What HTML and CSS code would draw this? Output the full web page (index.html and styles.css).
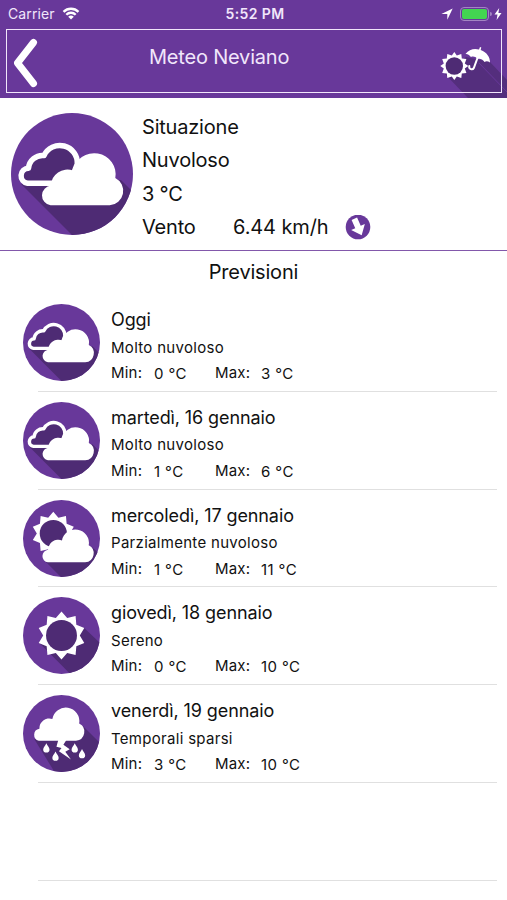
FILE: index.html
```html
<!DOCTYPE html>
<html lang="it">
<head>
    <meta charset="UTF-8">
    <meta name="viewport" content="width=device-width, initial-scale=1.0">
    <title>Meteo Neviano</title>
    <link rel="stylesheet" href="styles.css">
</head>
<body>
    <!-- Shared shapes -->
    <svg class="defs" width="0" height="0">
        <defs>
            <clipPath id="disc"><circle cx="61" cy="61" r="61"/></clipPath>
            <path id="cloud" d="M41 92.3 A10 10 0 0 1 41.500 72.500 A16 16 0 0 1 63 57.500 A21 21 0 0 1 104.500 65 A14.5 14.5 0 0 1 99 92.3 Z"/>
            <polygon id="sun" points="0,-38 9,-27.6 22.3,-30.7 23.5,-17 36.1,-11.7 29,0 36.1,11.7 23.5,17 22.3,30.7 9,27.6 0,38 -9,27.6 -22.3,30.7 -23.5,17 -36.1,11.7 -29,0 -36.1,-11.7 -23.5,-17 -22.3,-30.7 -9,-27.6"/>
            <path id="drop" d="M0 -7.5 C1.5 -3.5 5 -1 5 2.3 A5 5 0 0 1 -5 2.3 C-5 -1 -1.5 -3.5 0 -7.5Z"/>
            <symbol id="nuvoloso" viewBox="0 0 122 122">
                <g clip-path="url(#disc)">
                    <rect class="base" width="122" height="122"/>
                    <path class="dark" d="M10 71 L62 123 H122 V79 L110 67 Z"/>
                    <path class="outline" d="M46 70.3 H16.500 A7.6 7.6 0 0 1 17.500 55.2 A14 14 0 0 1 33 42.500 A17.5 17.5 0 0 1 66.300 51 L62 62 Z"/>
                    <use href="#cloud" class="light" transform="translate(-2.300 0) scale(1.020 1)"/>
                </g>
            </symbol>
            <symbol id="parziale" viewBox="0 0 122 122">
                <g clip-path="url(#disc)">
                    <rect class="base" width="122" height="122"/>
                    <path class="dark" d="M34 96 L60 122 H122 V85 L108 74 Z"/>
                    <use href="#sun" class="light" transform="translate(48 53) scale(.9)"/>
                    <circle class="dark" cx="48" cy="53" r="21.5"/>
                    <use href="#cloud" class="light" transform="translate(-2.500 6.5) scale(1.020 1)"/>
                </g>
            </symbol>
            <symbol id="sereno" viewBox="0 0 122 122">
                <g clip-path="url(#disc)">
                    <rect class="base" width="122" height="122"/>
                    <path class="dark" d="M26 73 L75 122 H122 V73 L97 49 Z"/>
                    <use href="#sun" class="light" transform="translate(61 61)"/>
                    <circle class="dark" cx="61" cy="61" r="24.5"/>
                </g>
            </symbol>
            <symbol id="temporali" viewBox="0 0 122 122">
                <g clip-path="url(#disc)">
                    <rect class="base" width="122" height="122"/>
                    <path class="dark" d="M18 70 L50 122 H122 V76 L95 49 Z"/>
                    <path class="light" d="M25 72.500 A9.700 9.700 0 0 1 26 53.500 A15.500 15.500 0 0 1 46.500 38 A21.500 21.500 0 0 1 89 45 A14.500 14.500 0 0 1 84 72.500 Z"/>
                    <path class="light" d="M56 71 L53 82 L61 84 L57 89 L76 102 L67 90 L74 86 L64 79 L69 71Z"/>
                    <use href="#drop" class="light" x="37" y="84"/>
                    <use href="#drop" class="light" x="51.5" y="97"/>
                    <use href="#drop" class="light" x="82" y="84"/>
                    <use href="#drop" class="light" x="93.500" y="93"/>
                </g>
            </symbol>
        </defs>
    </svg>

    <header class="header">
        <div class="status-bar">
            <div class="status-left">
                <span class="carrier">Carrier</span>
                <svg width="18" height="13" viewBox="0 0 18 13">
                    <path class="wifi" d="M1.500 4.800 A10.800 10.800 0 0 1 16.500 4.800 M4.300 7.700 A6.700 6.700 0 0 1 13.700 7.700"/>
                    <path class="light" d="M9 12.500 L6.200 9.800 A4.200 4.200 0 0 1 11.800 9.800Z"/>
                </svg>
            </div>
            <span class="clock">5:52 PM</span>
            <div class="status-right">
                <svg width="12" height="12" viewBox="0 0 12 12"><path class="light" d="M11.700 .4 L6.300 11.700 V6 H.4Z"/></svg>
                <span class="battery"><span class="level"></span></span>
                <svg width="8" height="12" viewBox="0 0 8 12"><path class="light" d="M5.200 0 L.5 6.600 H3.500 L2.600 12 L7.500 5 H4.400Z"/></svg>
            </div>
        </div>
        <div class="nav-bar">
            <svg class="back" width="26" height="50" viewBox="0 0 26 50"><path d="M21.500 4.500 L5.500 25 L21.500 45.500"/></svg>
            <h1>Meteo Neviano</h1>
        </div>
        <svg class="brand" width="77" height="63" viewBox="0 0 77 63">
            <path class="shade" d="M15 39 L38 63 H77 V45 L60 27 L36 22 Z"/>
            <path class="ray" d="M49 28 L77 57"/>
            <g transform="translate(24.300 31)">
                <path class="light" d="M0-14 L2.500-10.500 L7-12.100 L7.500-7.500 L12.100-7 L10.500-2.500 L14 0 L10.500 2.500 L12.100 7 L7.500 7.500 L7 12.100 L2.500 10.500 L0 14 L-2.500 10.500 L-7 12.100 L-7.500 7.500 L-12.100 7 L-10.500 2.500 L-14 0 L-10.500-2.500 L-12.100-7 L-7.500-7.500 L-7-12.100 L-2.500-10.500Z"/>
                <circle class="dark" r="8.700"/>
            </g>
            <path class="light" d="M35.500 19 C39 14.500 44 13 49 14.500 L50 12 L51.300 12.500 L50.700 15 C57 17.500 60 22 60 27.500 C58 26 56 26 54.500 27 C52.500 24 50 23.500 47.500 24 C45.500 21.500 43 21 41 22 C39 19.500 37 18.500 35.500 19Z"/>
            <path class="handle" d="M48.200 21 L43.800 33 C42.500 35.500 38.500 34 39.300 31"/>
        </svg>
    </header>

    <section class="current">
        <svg class="current-icon"><use href="#nuvoloso"/></svg>
        <div class="current-info">
            <div>Situazione</div>
            <div>Nuvoloso</div>
            <div>3 °C</div>
            <div class="wind">
                <span class="wind-label">Vento</span>
                <span class="wind-speed">6.44 km/h</span>
                <svg width="26" height="26" viewBox="0 0 26 26">
                    <circle class="base" cx="13" cy="12" r="12.300"/>
                    <path class="light" transform="rotate(-24 13 12)" d="M10 3 H16 V12 H20.500 L13 21 L5.500 12 H10Z"/>
                </svg>
            </div>
        </div>
    </section>

    <h2>Previsioni</h2>

    <ul class="forecast">
        <li>
            <svg class="day-icon"><use href="#nuvoloso"/></svg>
            <div class="day">
                <div class="date">Oggi</div>
                <div class="desc">Molto nuvoloso</div>
                <div class="temps"><span>Min:</span><span>0 °C</span><span>Max:</span><span>3 °C</span></div>
            </div>
        </li>
        <li>
            <svg class="day-icon"><use href="#nuvoloso"/></svg>
            <div class="day">
                <div class="date">martedì, 16 gennaio</div>
                <div class="desc">Molto nuvoloso</div>
                <div class="temps"><span>Min:</span><span>1 °C</span><span>Max:</span><span>6 °C</span></div>
            </div>
        </li>
        <li>
            <svg class="day-icon"><use href="#parziale"/></svg>
            <div class="day">
                <div class="date">mercoledì, 17 gennaio</div>
                <div class="desc">Parzialmente nuvoloso</div>
                <div class="temps"><span>Min:</span><span>1 °C</span><span>Max:</span><span>11 °C</span></div>
            </div>
        </li>
        <li>
            <svg class="day-icon"><use href="#sereno"/></svg>
            <div class="day">
                <div class="date">giovedì, 18 gennaio</div>
                <div class="desc">Sereno</div>
                <div class="temps"><span>Min:</span><span>0 °C</span><span>Max:</span><span>10 °C</span></div>
            </div>
        </li>
        <li>
            <svg class="day-icon"><use href="#temporali"/></svg>
            <div class="day">
                <div class="date">venerdì, 19 gennaio</div>
                <div class="desc">Temporali sparsi</div>
                <div class="temps"><span>Min:</span><span>3 °C</span><span>Max:</span><span>10 °C</span></div>
            </div>
        </li>
        <li></li>
    </ul>
</body>
</html>
```

FILE: styles.css
```css
* {
    box-sizing: border-box;
}

body {
    margin: 0;
    height: 900px;
    overflow: hidden;
    background-color: #fff;
    color: #111;
    font-family: Inter, "Liberation Sans", sans-serif;
}

svg {
    display: block;
    flex: none;
}

.defs {
    position: absolute;
}

.base {
    fill: #68389a;
}

.dark {
    fill: #4e2b74;
}

.light {
    fill: #fff;
}

.outline {
    fill: #4e2b74;
    stroke: #fff;
    stroke-width: 5.5;
    stroke-linejoin: round;
}

/* Header */
.header {
    position: relative;
    height: 98px;
    background-color: #68389a;
    color: #f1e6fb;
}

.status-bar {
    display: grid;
    grid-template-columns: 1fr auto 1fr;
    align-items: center;
    height: 29px;
    padding: 0 5px 2px 8px;
}

.status-left {
    display: flex;
    align-items: center;
    gap: 7px;
}

.carrier {
    font-size: 14px;
    letter-spacing: 0.1px;
}

.wifi {
    fill: none;
    stroke: #fff;
    stroke-width: 2.3;
}

.clock {
    font-size: 14px;
    font-weight: 600;
    letter-spacing: 0.4px;
}

.status-right {
    display: flex;
    justify-content: flex-end;
    align-items: center;
}

.battery {
    position: relative;
    width: 29px;
    height: 14px;
    margin: 0 5px 0 7px;
    padding: 1px;
    border: 1px solid #a385c3;
    border-radius: 4px;
}

.battery::after {
    content: "";
    position: absolute;
    top: 4px;
    right: -4px;
    width: 2px;
    height: 4px;
    border-radius: 0 2px 2px 0;
    background-color: #a385c3;
}

.level {
    display: block;
    width: 25px;
    height: 10px;
    border-radius: 2px;
    background-color: #43d551;
}

.nav-bar {
    position: relative;
    z-index: 1;
    display: flex;
    height: 64px;
    margin: 0 5px 0 6px;
    padding: 8px 5px 0;
    border: 1px solid #f1e6fb;
}

.back path {
    fill: none;
    stroke: #fff;
    stroke-width: 7;
    stroke-linecap: round;
    stroke-linejoin: round;
}

h1 {
    margin: 7px 0 0 111px;
    font-size: 20px;
    line-height: 24px;
    font-weight: 400;
    letter-spacing: -0.2px;
    white-space: nowrap;
}

.brand {
    position: absolute;
    top: 35px;
    right: 0;
}

.shade {
    fill: #542e7d;
}

.ray {
    stroke: #68389a;
    stroke-width: 1;
}

.handle {
    fill: none;
    stroke: #fff;
    stroke-width: 2;
    stroke-linecap: round;
}

/* Current conditions */
.current {
    display: flex;
    height: 153px;
    padding: 12px 11px 0;
    border-bottom: 1px solid #8258ab;
}

.current-icon {
    width: 122px;
    height: 122px;
    margin-top: 3px;
}

.current-info {
    margin: 1px 0 0 9px;
    font-size: 20px;
    line-height: 33.300px;
    letter-spacing: -0.200px;
}

.wind {
    display: flex;
    align-items: center;
}

.wind-label {
    width: 91px;
}

.wind-speed {
    width: 112px;
    letter-spacing: -0.1px;
}

h2 {
    margin: 0;
    padding-top: 9px;
    height: 43px;
    font-size: 20px;
    line-height: 24px;
    font-weight: 400;
    letter-spacing: -0.2px;
    text-align: center;
}

/* Forecast list */
.forecast {
    margin: 0;
    padding: 0;
    list-style: none;
}

.forecast li {
    position: relative;
    display: flex;
    height: 97.800px;
    padding: 10px 0 0 23px;
}

.forecast li::after {
    content: "";
    position: absolute;
    left: 38px;
    right: 10px;
    bottom: 0;
    height: 1px;
    background-color: #e0e0e0;
}

.day-icon {
    width: 77px;
    height: 77px;
}

.day {
    margin-left: 11px;
    padding-top: 4px;
}

.date {
    font-size: 18px;
    line-height: 24px;
    letter-spacing: -0.1px;
}

.desc {
    font-size: 15px;
    line-height: 20px;
    margin-top: 5.500px;
    letter-spacing: 0.3px;
}

.temps {
    display: grid;
    grid-template-columns: 43px 61px 46px auto;
    margin-top: 5.500px;
    font-size: 15px;
    line-height: 20px;
    letter-spacing: 0.2px;
}

.temps span:nth-child(even) {
    padding-top: 1px;
    letter-spacing: 0.4px;
}
```
